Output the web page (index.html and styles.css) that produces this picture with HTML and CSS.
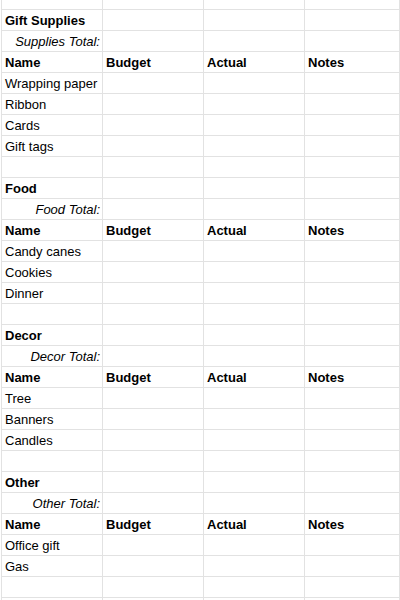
FILE: index.html
```html
<!DOCTYPE html>
<html>
<head>
<meta charset="utf-8">
<link rel="stylesheet" href="styles.css">
</head>
<body>
<div class="sheet">
  <div class="row row-top"><div class="cell"></div><div class="cell"></div><div class="cell"></div><div class="cell"></div></div>

  <div class="row"><div class="cell b">Gift Supplies</div><div class="cell"></div><div class="cell"></div><div class="cell"></div></div>
  <div class="row"><div class="cell total">Supplies Total:</div><div class="cell"></div><div class="cell"></div><div class="cell"></div></div>
  <div class="row"><div class="cell b">Name</div><div class="cell b">Budget</div><div class="cell b">Actual</div><div class="cell b">Notes</div></div>
  <div class="row"><div class="cell">Wrapping paper</div><div class="cell"></div><div class="cell"></div><div class="cell"></div></div>
  <div class="row"><div class="cell">Ribbon</div><div class="cell"></div><div class="cell"></div><div class="cell"></div></div>
  <div class="row"><div class="cell">Cards</div><div class="cell"></div><div class="cell"></div><div class="cell"></div></div>
  <div class="row"><div class="cell">Gift tags</div><div class="cell"></div><div class="cell"></div><div class="cell"></div></div>
  <div class="row"><div class="cell"></div><div class="cell"></div><div class="cell"></div><div class="cell"></div></div>

  <div class="row"><div class="cell b">Food</div><div class="cell"></div><div class="cell"></div><div class="cell"></div></div>
  <div class="row"><div class="cell total">Food Total:</div><div class="cell"></div><div class="cell"></div><div class="cell"></div></div>
  <div class="row"><div class="cell b">Name</div><div class="cell b">Budget</div><div class="cell b">Actual</div><div class="cell b">Notes</div></div>
  <div class="row"><div class="cell">Candy canes</div><div class="cell"></div><div class="cell"></div><div class="cell"></div></div>
  <div class="row"><div class="cell">Cookies</div><div class="cell"></div><div class="cell"></div><div class="cell"></div></div>
  <div class="row"><div class="cell">Dinner</div><div class="cell"></div><div class="cell"></div><div class="cell"></div></div>
  <div class="row"><div class="cell"></div><div class="cell"></div><div class="cell"></div><div class="cell"></div></div>

  <div class="row"><div class="cell b">Decor</div><div class="cell"></div><div class="cell"></div><div class="cell"></div></div>
  <div class="row"><div class="cell total">Decor Total:</div><div class="cell"></div><div class="cell"></div><div class="cell"></div></div>
  <div class="row"><div class="cell b">Name</div><div class="cell b">Budget</div><div class="cell b">Actual</div><div class="cell b">Notes</div></div>
  <div class="row"><div class="cell">Tree</div><div class="cell"></div><div class="cell"></div><div class="cell"></div></div>
  <div class="row"><div class="cell">Banners</div><div class="cell"></div><div class="cell"></div><div class="cell"></div></div>
  <div class="row"><div class="cell">Candles</div><div class="cell"></div><div class="cell"></div><div class="cell"></div></div>
  <div class="row"><div class="cell"></div><div class="cell"></div><div class="cell"></div><div class="cell"></div></div>

  <div class="row"><div class="cell b">Other</div><div class="cell"></div><div class="cell"></div><div class="cell"></div></div>
  <div class="row"><div class="cell total">Other Total:</div><div class="cell"></div><div class="cell"></div><div class="cell"></div></div>
  <div class="row"><div class="cell b">Name</div><div class="cell b">Budget</div><div class="cell b">Actual</div><div class="cell b">Notes</div></div>
  <div class="row"><div class="cell">Office gift</div><div class="cell"></div><div class="cell"></div><div class="cell"></div></div>
  <div class="row"><div class="cell">Gas</div><div class="cell"></div><div class="cell"></div><div class="cell"></div></div>
  <div class="row"><div class="cell"></div><div class="cell"></div><div class="cell"></div><div class="cell"></div></div>
  <div class="row"><div class="cell"></div><div class="cell"></div><div class="cell"></div><div class="cell"></div></div>
</div>
</body>
</html>
```

FILE: styles.css
```css
html, body {
  margin: 0;
  padding: 0;
  background: #ffffff;
  overflow: hidden;
}

body {
  width: 400px;
  height: 600px;
  font-family: "Liberation Sans", Arial, sans-serif;
  font-size: 13px;
  color: #000000;
}

.sheet {
  margin-left: 1px;
  border-left: 1px solid #e2e2e2;
}

.row {
  display: grid;
  grid-template-columns: 101px 101px 101px 1fr;
  border-bottom: 1px solid #e2e2e2;
}

.cell {
  box-sizing: border-box;
  height: 20px;
  padding: 1px 2px 0 3px;
  line-height: 19px;
  border-right: 1px solid #e2e2e2;
  white-space: nowrap;
  overflow: hidden;
}

.row-top .cell {
  height: 9px;
}

.b {
  font-weight: bold;
}

.total {
  font-style: italic;
  text-align: right;
}
```
